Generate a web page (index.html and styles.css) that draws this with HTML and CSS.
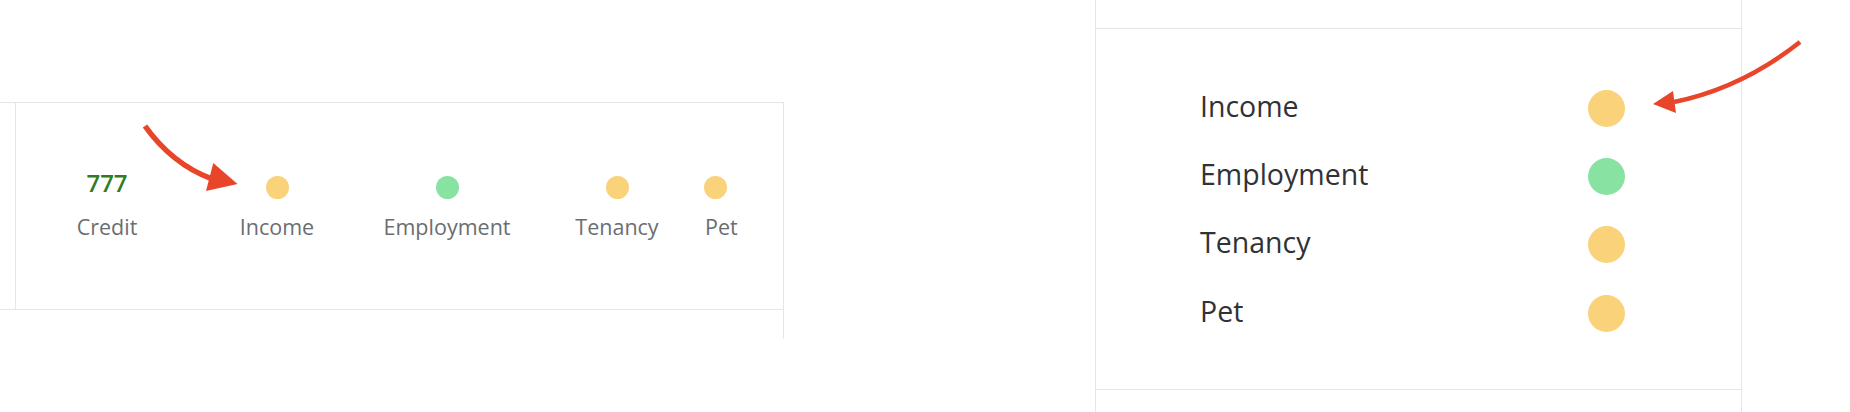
FILE: index.html
```html
<!DOCTYPE html>
<html lang="en">
<head>
<meta charset="utf-8">
<title>Screening summary</title>
<link rel="stylesheet" href="styles.css">
</head>
<body>
<div class="page">
  <section class="strip">
    <div class="strip-row">
      <div class="stub"></div>
      <div class="strip-cell">
        <div class="metrics">
          <div class="metric">
            <div class="metric-top"><span class="score">777</span></div>
            <div class="metric-label">Credit</div>
          </div>
          <div class="metric">
            <div class="metric-top"><span class="dot dot-warn"></span></div>
            <div class="metric-label">Income</div>
          </div>
          <div class="metric">
            <div class="metric-top"><span class="dot dot-ok"></span></div>
            <div class="metric-label">Employment</div>
          </div>
          <div class="metric">
            <div class="metric-top"><span class="dot dot-warn"></span></div>
            <div class="metric-label">Tenancy</div>
          </div>
          <div class="metric metric-last">
            <div class="metric-top"><span class="dot dot-warn"></span></div>
            <div class="metric-label">Pet</div>
          </div>
        </div>
      </div>
    </div>
    <div class="strip-next"></div>
  </section>

  <section class="panel">
    <div class="panel-head"></div>
    <div class="panel-body">
      <div class="check-row"><span class="check-name">Income</span><span class="dot dot-lg dot-warn"></span></div>
      <div class="check-row"><span class="check-name">Employment</span><span class="dot dot-lg dot-ok"></span></div>
      <div class="check-row"><span class="check-name">Tenancy</span><span class="dot dot-lg dot-warn"></span></div>
      <div class="check-row"><span class="check-name">Pet</span><span class="dot dot-lg dot-warn"></span></div>
    </div>
    <div class="panel-foot"></div>
  </section>

  <svg class="annotations" width="1850" height="412" viewBox="0 0 1850 412" aria-hidden="true">
    <path d="M145,126 Q172,164 212,179" fill="none" stroke="#e8452b" stroke-width="5.5" stroke-linecap="butt"/>
    <polygon points="237.5,184 213.3,163 206,191" fill="#e8452b"/>
    <path d="M1800,42 Q1742,88 1674,102" fill="none" stroke="#e8452b" stroke-width="4.5" stroke-linecap="butt"/>
    <polygon points="1653,104 1673,91 1676,113" fill="#e8452b"/>
  </svg>
</div>
</body>
</html>
```

FILE: styles.css
```css
html, body {
  margin: 0;
  padding: 0;
  background: #ffffff;
}

body {
  font-family: "Open Sans", "Noto Sans", "DejaVu Sans", sans-serif;
  width: 1850px;
  height: 412px;
  overflow: hidden;
}

.page {
  position: relative;
  display: flex;
  align-items: flex-start;
  width: 1850px;
  height: 412px;
}

/* left strip */
.strip {
  width: 784px;
  margin-top: 102px;
  flex: 0 0 auto;
}

.strip-row {
  display: flex;
  border-top: 1px solid #e3e6ea;
  border-bottom: 1px solid #e3e6ea;
}

.stub {
  width: 15px;
  flex: 0 0 auto;
}

.strip-cell {
  flex: 1 1 auto;
  height: 206px;
  box-sizing: border-box;
  border-left: 1px solid #e3e6ea;
  border-right: 1px solid #e3e6ea;
  padding: 65px 0 0 6px;
}

.strip-next {
  height: 29px;
  border-right: 1px solid #e3e6ea;
}

.metrics {
  display: grid;
  grid-template-columns: 170px 170px 170px 170px 23px;
}

.metric {
  text-align: center;
}

.metric-last {
  margin-left: 3px;
}

.metric-top {
  height: 32px;
  box-sizing: border-box;
  display: flex;
  justify-content: center;
  align-items: center;
}

.metric-top .dot {
  margin-top: 6px;
}

.score {
  font-size: 24px;
  line-height: 32px;
  font-weight: 600;
  color: #2f7d21;
  padding-bottom: 2px;
}

.metric-label {
  margin-top: 13px;
  font-size: 21.5px;
  line-height: 28px;
  color: #6a6e71;
  white-space: nowrap;
  text-align: center;
}

.metric-last .metric-label {
  text-align: left;
}

.dot {
  display: block;
  width: 23px;
  height: 23px;
  border-radius: 50%;
  flex: 0 0 auto;
}

.dot-warn {
  background: #f9d27a;
}

.dot-ok {
  background: #88e3a3;
}

.dot-lg {
  width: 37px;
  height: 37px;
}

/* right panel */
.panel {
  margin-left: 311px;
  width: 647px;
  height: 412px;
  box-sizing: border-box;
  border-left: 1px solid #e3e6ea;
  border-right: 1px solid #e3e6ea;
  flex: 0 0 auto;
  display: flex;
  flex-direction: column;
}

.panel-head {
  height: 28px;
  border-bottom: 1px solid #e3e6ea;
  flex: 0 0 auto;
}

.panel-body {
  box-sizing: border-box;
  height: 361px;
  padding: 45px 0 0 104px;
  border-bottom: 1px solid #e3e6ea;
  flex: 0 0 auto;
}

.check-row {
  display: grid;
  grid-template-columns: 388px 37px;
  align-items: center;
  height: 68.33px;
}

.check-name {
  font-size: 28.5px;
  line-height: 36px;
  color: #2f3336;
  padding-bottom: 5px;
}

.panel-foot {
  flex: 1 1 auto;
}

.annotations {
  position: absolute;
  left: 0;
  top: 0;
  pointer-events: none;
}
```
